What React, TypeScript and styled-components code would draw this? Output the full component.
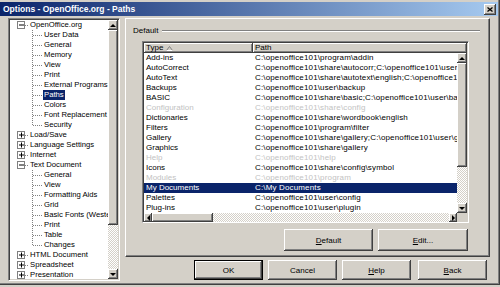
import React from 'react';
import styled, { createGlobalStyle, css } from 'styled-components';

const Global = createGlobalStyle`
  html, body { margin: 0; padding: 0; background: #d4d0c8; overflow: hidden; }
  body { font-family: "Liberation Sans", Arial, sans-serif; font-size: 8px; color: #000; }
  * { box-sizing: border-box; }
`;

const FACE = '#d4d0c8';
const NAVY = '#0a246a';

const raised = css`
  background: ${FACE};
  box-shadow: inset -1px -1px #404040, inset 1px 1px #ffffff, inset -2px -2px #808080;
`;

const Window = styled.div`
  width: 500px;
  height: 285px;
  background: ${FACE};
  padding-top: 2px;
  box-shadow: inset -1px -1px #404040, inset -2px -2px #808080;
  display: flex;
  flex-direction: column;
`;

const TitleBar = styled.div`
  height: 14px;
  margin-right: 2px;
  display: flex;
  align-items: center;
  justify-content: space-between;
  padding: 0 2px 0 3px;
  background: linear-gradient(to right, ${NAVY}, #a6caf0);
`;

const TitleText = styled.span`
  color: #fff;
  font-weight: bold;
  font-size: 8.5px;
  white-space: nowrap;
`;

const CloseButton = styled.div`
  ${raised};
  width: 12px;
  height: 11px;
  display: flex;
  align-items: center;
  justify-content: center;
`;

const Body = styled.div`
  flex: 1;
  display: flex;
  gap: 5px;
  padding: 2px 8px 0 8px;
`;

const sunken = css`
  border: 1px solid;
  border-color: #808080 #ffffff #ffffff #808080;
  box-shadow: inset 1px 1px #404040, inset -1px -1px ${FACE};
  padding: 1px;
`;

const TreeBox = styled.div`
  ${sunken};
  width: 112px;
  height: 263px;
  background: #fff;
  display: flex;
`;

const TreeList = styled.div`
  flex: 1;
  overflow: hidden;
  display: flex;
  flex-direction: column;
`;

const TreeRow = styled.div`
  height: 10px;
  flex: 0 0 10px;
  display: flex;
  align-items: center;
`;

const TreeLabel = styled.span<{ $selected?: boolean }>`
  font-size: 7.7px;
  line-height: 10px;
  height: 10px;
  padding: 0 1px;
  white-space: nowrap;
  background: ${(p) => (p.$selected ? NAVY : 'transparent')};
  color: ${(p) => (p.$selected ? '#fff' : '#000')};
`;

const ScrollV = styled.div`
  width: 10px;
  flex: 0 0 10px;
  display: flex;
  flex-direction: column;
`;

const ScrollH = styled.div`
  flex: 1;
  display: flex;
  height: 9px;
`;

const ScrollButton = styled.div<{ $w: number; $h: number }>`
  ${raised};
  width: ${(p) => p.$w}px;
  height: ${(p) => p.$h}px;
  flex: 0 0 auto;
  display: flex;
  align-items: center;
  justify-content: center;
`;

const Thumb = styled.div<{ $size: number }>`
  ${raised};
  flex: 0 0 ${(p) => p.$size}px;
`;

const Track = styled.div`
  flex: 1;
  background-image: repeating-conic-gradient(#ffffff 0 25%, ${FACE} 0 50%);
  background-size: 2px 2px;
`;

const Corner = styled.div`
  width: 10px;
  flex: 0 0 10px;
  background: ${FACE};
`;

const RightColumn = styled.div`
  width: 365px;
  display: flex;
  flex-direction: column;
  gap: 3px;
`;

const TabPage = styled.div`
  height: 239px;
  border: 1px solid;
  border-color: #ffffff #404040 #404040 #ffffff;
  box-shadow: inset -1px -1px #808080;
  display: flex;
  flex-direction: column;
  padding: 7px 9px 0 7px;
`;

const GroupHeader = styled.div`
  height: 10px;
  display: flex;
  align-items: center;
  gap: 4px;
`;

const GroupLabel = styled.span`
  line-height: 10px;
`;

const GroupLine = styled.div`
  flex: 1;
  height: 2px;
  border-top: 1px solid #808080;
  border-bottom: 1px solid #ffffff;
`;

const ListBox = styled.div`
  ${sunken};
  margin: 5px 11px 0 9px;
  height: 182px;
  background: #fff;
  display: flex;
  flex-direction: column;
`;

const HeaderRow = styled.div`
  height: 10px;
  flex: 0 0 10px;
  display: flex;
`;

const HeaderCell = styled.div<{ $w?: number }>`
  ${raised};
  ${(p) => (p.$w ? `width: ${p.$w}px; flex: 0 0 ${p.$w}px;` : 'flex: 1;')}
  display: flex;
  align-items: center;
  gap: 3px;
  padding-left: 2px;
  line-height: 10px;
`;

const ListBody = styled.div`
  height: 160px;
  display: flex;
`;

const Rows = styled.div`
  flex: 1;
  overflow: hidden;
  display: flex;
  flex-direction: column;
`;

const Row = styled.div<{ $selected?: boolean; $disabled?: boolean }>`
  height: 10px;
  flex: 0 0 10px;
  display: flex;
  line-height: 10px;
  white-space: nowrap;
  background: ${(p) => (p.$selected ? NAVY : 'transparent')};
  color: ${(p) => (p.$selected ? '#fff' : p.$disabled ? '#c2c2c2' : '#000')};
`;

const Cell = styled.div<{ $w?: number; $spacing?: number }>`
  ${(p) => (p.$w ? `width: ${p.$w}px; flex: 0 0 ${p.$w}px;` : 'flex: 1;')}
  padding-left: 2px;
  letter-spacing: ${(p) => p.$spacing ?? 0}px;
  overflow: hidden;
`;

const HScrollRow = styled.div`
  height: 9px;
  display: flex;
`;

const ButtonRow = styled.div<{ $pad: number; $top?: number }>`
  display: flex;
  justify-content: flex-end;
  gap: 5px;
  padding-right: ${(p) => p.$pad}px;
  margin-top: ${(p) => p.$top ?? 0}px;
`;

const PushButton = styled.div<{ $w: number; $h: number; $default?: boolean; $gapBefore?: number }>`
  width: ${(p) => p.$w}px;
  height: ${(p) => p.$h}px;
  margin-left: ${(p) => p.$gapBefore ?? 0}px;
  background: ${FACE};
  display: flex;
  align-items: center;
  justify-content: center;
  box-shadow: inset -1px -1px #404040, inset 1px 1px #ffffff, inset -2px -2px #808080;
  ${(p) =>
    p.$default &&
    css`
      border: 1px solid #000;
    `}
`;

const Mnemonic = styled.span`
  text-decoration: underline;
`;

type Dir = 'up' | 'down' | 'left' | 'right';

const Arrow: React.FC<{ dir: Dir }> = ({ dir }) => {
  const pts: Record<Dir, string> = {
    up: '0,3 3,0 6,3',
    down: '0,0 6,0 3,3',
    left: '3,0 3,6 0,3',
    right: '0,0 0,6 3,3',
  };
  const vertical = dir === 'up' || dir === 'down';
  return (
    <svg width={vertical ? 6 : 3} height={vertical ? 3 : 6} viewBox={vertical ? '0 0 6 3' : '0 0 3 6'}>
      <polygon points={pts[dir]} fill="#000" />
    </svg>
  );
};

const Guide: React.FC<{ level: number; expanded?: boolean; last?: boolean }> = ({ level, expanded, last }) => {
  if (level === 0) {
    return (
      <svg width={19} height={10} viewBox="0 0 19 10" style={{ flex: '0 0 19px' }}>
        <rect x={7.5} y={1.5} width={7} height={7} fill="#fff" stroke="#808080" />
        <line x1={9} y1={5} x2={14} y2={5} stroke="#000" />
        {!expanded && <line x1={11.5} y1={2.5} x2={11.5} y2={7.5} stroke="#000" />}
        <line x1={15} y1={5.5} x2={19} y2={5.5} stroke="#808080" strokeDasharray="1 1" />
      </svg>
    );
  }
  return (
    <svg width={33} height={10} viewBox="0 0 33 10" style={{ flex: '0 0 33px' }}>
      <line x1={22.5} y1={0} x2={22.5} y2={last ? 5.5 : 10} stroke="#808080" strokeDasharray="1 1" />
      <line x1={23} y1={5.5} x2={33} y2={5.5} stroke="#808080" strokeDasharray="1 1" />
    </svg>
  );
};

type TreeItem = { label: string; level: number; expanded?: boolean; last?: boolean; selected?: boolean };

const tree: TreeItem[] = [
  { label: 'OpenOffice.org', level: 0, expanded: true },
  { label: 'User Data', level: 1 },
  { label: 'General', level: 1 },
  { label: 'Memory', level: 1 },
  { label: 'View', level: 1 },
  { label: 'Print', level: 1 },
  { label: 'External Programs', level: 1 },
  { label: 'Paths', level: 1, selected: true },
  { label: 'Colors', level: 1 },
  { label: 'Font Replacement', level: 1 },
  { label: 'Security', level: 1, last: true },
  { label: 'Load/Save', level: 0 },
  { label: 'Language Settings', level: 0 },
  { label: 'Internet', level: 0 },
  { label: 'Text Document', level: 0, expanded: true },
  { label: 'General', level: 1 },
  { label: 'View', level: 1 },
  { label: 'Formatting Aids', level: 1 },
  { label: 'Grid', level: 1 },
  { label: 'Basic Fonts (Western)', level: 1 },
  { label: 'Print', level: 1 },
  { label: 'Table', level: 1 },
  { label: 'Changes', level: 1, last: true },
  { label: 'HTML Document', level: 0 },
  { label: 'Spreadsheet', level: 0 },
  { label: 'Presentation', level: 0 },
];

type PathItem = { type: string; path: string; disabled?: boolean; selected?: boolean };

const paths: PathItem[] = [
  { type: 'Add-ins', path: 'C:\\openoffice101\\program\\addin' },
  { type: 'AutoCorrect', path: 'C:\\openoffice101\\share\\autocorr;C:\\openoffice101\\user\\autocorr' },
  { type: 'AutoText', path: 'C:\\openoffice101\\share\\autotext\\english;C:\\openoffice101\\user\\autotext' },
  { type: 'Backups', path: 'C:\\openoffice101\\user\\backup' },
  { type: 'BASIC', path: 'C:\\openoffice101\\share\\basic;C:\\openoffice101\\user\\basic' },
  { type: 'Configuration', path: 'C:\\openoffice101\\share\\config', disabled: true },
  { type: 'Dictionaries', path: 'C:\\openoffice101\\share\\wordbook\\english' },
  { type: 'Filters', path: 'C:\\openoffice101\\program\\filter' },
  { type: 'Gallery', path: 'C:\\openoffice101\\share\\gallery;C:\\openoffice101\\user\\gallery' },
  { type: 'Graphics', path: 'C:\\openoffice101\\share\\gallery' },
  { type: 'Help', path: 'C:\\openoffice101\\help', disabled: true },
  { type: 'Icons', path: 'C:\\openoffice101\\share\\config\\symbol' },
  { type: 'Modules', path: 'C:\\openoffice101\\program', disabled: true },
  { type: 'My Documents', path: 'C:\\My Documents', selected: true },
  { type: 'Palettes', path: 'C:\\openoffice101\\user\\config' },
  { type: 'Plug-ins', path: 'C:\\openoffice101\\user\\plugin' },
];

const SortIcon = () => (
  <svg width={7} height={5} viewBox="0 0 7 5">
    <polyline points="0.5,4.5 3.5,0.5 6.5,4.5" fill="none" stroke="#808080" />
    <line x1={0.5} y1={4.5} x2={6.5} y2={4.5} stroke="#ffffff" />
  </svg>
);

export default function App() {
  return (
    <>
      <Global />
      <Window>
        <TitleBar>
          <TitleText>Options - OpenOffice.org - Paths</TitleText>
          <CloseButton>
            <svg width={6} height={5} viewBox="0 0 6 5">
              <path d="M0.5 0.5 L5.5 4.5 M5.5 0.5 L0.5 4.5" stroke="#000" strokeWidth={1.3} />
            </svg>
          </CloseButton>
        </TitleBar>
        <Body>
          <TreeBox>
            <TreeList>
              {tree.map((t, i) => (
                <TreeRow key={i}>
                  <Guide level={t.level} expanded={t.expanded} last={t.last} />
                  <TreeLabel $selected={t.selected}>{t.label}</TreeLabel>
                </TreeRow>
              ))}
            </TreeList>
            <ScrollV>
              <ScrollButton $w={10} $h={10}>
                <Arrow dir="up" />
              </ScrollButton>
              <Thumb $size={195} />
              <Track />
              <ScrollButton $w={10} $h={10}>
                <Arrow dir="down" />
              </ScrollButton>
            </ScrollV>
          </TreeBox>
          <RightColumn>
            <TabPage>
              <GroupHeader>
                <GroupLabel>Default</GroupLabel>
                <GroupLine />
              </GroupHeader>
              <ListBox>
                <HeaderRow>
                  <HeaderCell $w={109}>
                    Type <SortIcon />
                  </HeaderCell>
                  <HeaderCell>Path</HeaderCell>
                </HeaderRow>
                <ListBody>
                  <Rows>
                    {paths.map((p) => (
                      <Row key={p.type} $selected={p.selected} $disabled={p.disabled}>
                        <Cell $w={109}>{p.type}</Cell>
                        <Cell $spacing={0.15}>{p.path}</Cell>
                      </Row>
                    ))}
                  </Rows>
                  <ScrollV>
                    <ScrollButton $w={10} $h={10}>
                      <Arrow dir="up" />
                    </ScrollButton>
                    <Thumb $size={104} />
                    <Track />
                    <ScrollButton $w={10} $h={10}>
                      <Arrow dir="down" />
                    </ScrollButton>
                  </ScrollV>
                </ListBody>
                <HScrollRow>
                  <ScrollH>
                    <ScrollButton $w={8} $h={9}>
                      <Arrow dir="left" />
                    </ScrollButton>
                    <Thumb $size={61} />
                    <Track />
                    <ScrollButton $w={8} $h={9}>
                      <Arrow dir="right" />
                    </ScrollButton>
                  </ScrollH>
                  <Corner />
                </HScrollRow>
              </ListBox>
              <ButtonRow $pad={12} $top={6}>
                <PushButton $w={89} $h={22}>
                  <span>
                    <Mnemonic>D</Mnemonic>efault
                  </span>
                </PushButton>
                <PushButton $w={90} $h={22}>
                  <span>
                    <Mnemonic>E</Mnemonic>dit...
                  </span>
                </PushButton>
              </ButtonRow>
            </TabPage>
            <ButtonRow $pad={3}>
              <PushButton $w={69} $h={20} $default>
                OK
              </PushButton>
              <PushButton $w={69} $h={20}>
                Cancel
              </PushButton>
              <PushButton $w={69} $h={20}>
                <span>
                  <Mnemonic>H</Mnemonic>elp
                </span>
              </PushButton>
              <PushButton $w={69} $h={20} $gapBefore={2}>
                <span>
                  <Mnemonic>B</Mnemonic>ack
                </span>
              </PushButton>
            </ButtonRow>
          </RightColumn>
        </Body>
      </Window>
    </>
  );
}
